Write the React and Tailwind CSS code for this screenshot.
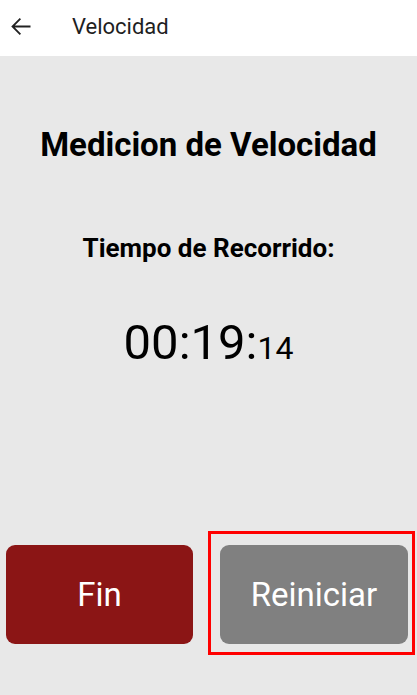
import React from "react";

export default function App() {
  return (
    <div className="w-[417px] h-[695px] bg-[#e8e8e8] flex flex-col" style={{ fontFamily: "Roboto, 'Noto Sans', sans-serif" }}>
      <header className="h-[56px] pb-[4px] bg-white flex items-center shrink-0">
        <svg className="ml-[8px] w-[27px] h-[27px] text-[#222]" viewBox="0 0 24 24" fill="none" stroke="currentColor" strokeWidth="1.6">
          <path d="M20 12H4M11 5l-7 7 7 7" />
        </svg>
        <h2 className="ml-[37px] text-[22px] text-[#1f1f1f]">Velocidad</h2>
      </header>

      <main className="flex-1 flex flex-col items-center">
        <h1 className="mt-[69px] text-[33px] font-bold text-black leading-[40px]">Medicion de Velocidad</h1>
        <p className="mt-[67px] text-[26px] font-bold text-black leading-[32px]">Tiempo de Recorrido:</p>
        <div className="mt-[49px] flex items-baseline text-black">
          <span className="text-[49px] leading-[60px]">00:19:</span>
          <span className="text-[32px] leading-[40px]">14</span>
        </div>

        <div className="mt-auto mb-[40px] w-full flex items-start pl-[6px]">
          <button className="mt-[14px] w-[187px] h-[99px] rounded-[9px] bg-[#8b1515] text-white text-[33px]">
            Fin
          </button>
          <div className="ml-[15px] border-[3px] border-[#ff0000] pt-[11px] pb-[8px] pl-[9px] pr-[4px]">
            <button className="w-[188px] h-[99px] rounded-[9px] bg-[#808080] text-white text-[33px]">
              Reiniciar
            </button>
          </div>
        </div>
      </main>
    </div>
  );
}
